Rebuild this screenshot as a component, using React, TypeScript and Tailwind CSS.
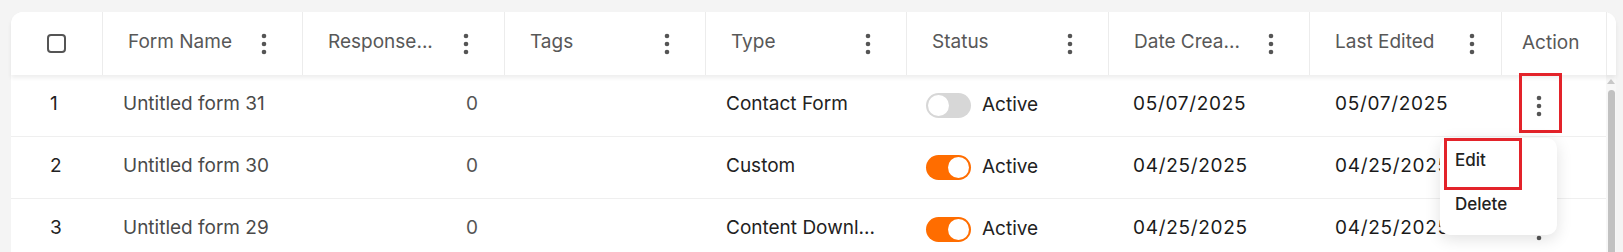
import React from 'react';

const Kebab: React.FC<{ className?: string }> = ({ className }) => (
    <svg width="6" height="22" viewBox="0 0 6 22" className={className}>
        <circle cx="3" cy="3" r="2.3" fill="currentColor" />
        <circle cx="3" cy="11" r="2.3" fill="currentColor" />
        <circle cx="3" cy="19" r="2.3" fill="currentColor" />
    </svg>
);

const Toggle: React.FC<{ on: boolean }> = ({ on }) => (
    <div className={`w-[45px] h-[25px] rounded-full p-[2px] flex ${on ? 'bg-[#ff6d00] justify-end' : 'bg-[#d7d7d7] justify-start'}`}>
        <div className="w-[21px] h-[21px] rounded-full bg-white" />
    </div>
);

const columns = 'grid grid-cols-[92px_200px_202px_201px_201px_202px_201px_192px_104px]';

const headers = [
    { label: 'Form Name', pr: 'pr-[35px]' },
    { label: 'Response...', pr: 'pr-[35px]' },
    { label: 'Tags', pr: 'pr-[35px]' },
    { label: 'Type', pr: 'pr-[35px]' },
    { label: 'Status', pr: 'pr-[35px]' },
    { label: 'Date Crea...', pr: 'pr-[35px]' },
    { label: 'Last Edited', pr: 'pr-[26px]' },
];

const rows = [
    { id: 1, name: 'Untitled form 31', responses: '0', type: 'Contact Form', on: false, created: '05/07/2025', edited: '05/07/2025' },
    { id: 2, name: 'Untitled form 30', responses: '0', type: 'Custom', on: true, created: '04/25/2025', edited: '04/25/2025' },
    { id: 3, name: 'Untitled form 29', responses: '0', type: 'Content Downl...', on: true, created: '04/25/2025', edited: '04/25/2025' },
];

export default function App() {
    return (
        <div className="h-[252px] overflow-hidden bg-[#f4f4f4] pl-[11px] pt-[12px] font-['Inter',sans-serif] text-[19px]">
            <div className="relative w-[1605px] h-[300px] bg-white rounded-t-[12px]">
                {/* header */}
                <div className="relative z-10 flex h-[63px] bg-white rounded-t-[12px] shadow-[0_3px_4px_rgba(0,0,0,0.07)]">
                    <div className={columns}>
                        <div className="flex items-center justify-center border-r border-[#ececec]">
                            <div className="w-[19px] h-[19px] rounded-[4px] border-2 border-[#555]" />
                        </div>
                        {headers.map(h => (
                            <div key={h.label} className={`flex items-center justify-between border-r border-[#ececec] pl-[25px] ${h.pr} text-[#585858]`}>
                                <span className="pb-[3px] whitespace-nowrap">{h.label}</span>
                                <Kebab className="text-[#555]" />
                            </div>
                        ))}
                        <div className="flex items-center pl-[20px] text-[#585858]">
                            <span>Action</span>
                        </div>
                    </div>
                    <div className="w-[10px] border-l border-[#ececec]" />
                </div>

                {/* body */}
                <div className="flex">
                    <div>
                        {rows.map(r => (
                            <div key={r.id} className={`${columns} h-[62px] border-b border-[#efefef]`}>
                                <div className="flex items-center pl-[39px] pb-[2px] text-[#222]">{r.id}</div>
                                <div className="flex items-center pl-[20px] pb-[2px] text-[#4a4a4a] whitespace-nowrap">{r.name}</div>
                                <div className="flex items-center justify-end pr-[27px] pb-[2px] text-[#555]">{r.responses}</div>
                                <div />
                                <div className="flex items-center pl-[20px] pb-[2px] text-[#222] whitespace-nowrap">{r.type}</div>
                                <div className="flex items-center gap-[11px] pl-[19px]">
                                    <Toggle on={r.on} />
                                    <span className="text-[#222]">Active</span>
                                </div>
                                <div className="flex items-center pl-[24px] pb-[2px] text-[#1a1a1a] tracking-[0.7px]">{r.created}</div>
                                <div className="flex items-center pl-[25px] pb-[2px] text-[#1a1a1a] tracking-[0.7px]">{r.edited}</div>
                                <div className="flex items-center pl-[34px]">
                                    <Kebab className="text-[#555]" />
                                </div>
                            </div>
                        ))}
                    </div>
                    <div className="w-[10px] bg-[#f7f7f7] flex flex-col items-center pt-[4px]">
                        <div className="w-0 h-0 border-l-[4px] border-r-[4px] border-b-[5px] border-l-transparent border-r-transparent border-b-[#c8c8c8]" />
                        <div className="mt-[6px] w-[7px] h-[200px] rounded-full bg-[#c1c1c1]" />
                    </div>
                </div>

                {/* annotation on the action button */}
                <div className="absolute left-[1508px] top-[61px] w-[43px] h-[60px] border-[3px] border-[#e3232a] z-20" />

                {/* dropdown menu */}
                <div className="absolute left-[1429px] top-[126px] w-[117px] h-[97px] bg-white rounded-[10px] shadow-[0_4px_16px_rgba(0,0,0,0.12)] z-20 text-[17px] font-medium text-[#222]">
                    <div className="relative h-[44px] pl-[15px] pt-[10px]">
                        Edit
                        <div className="absolute left-[4px] top-0 w-[78px] h-[52px] border-[3px] border-[#e3232a]" />
                    </div>
                    <div className="pl-[15px] pt-[10px]">Delete</div>
                </div>
            </div>
        </div>
    );
}
